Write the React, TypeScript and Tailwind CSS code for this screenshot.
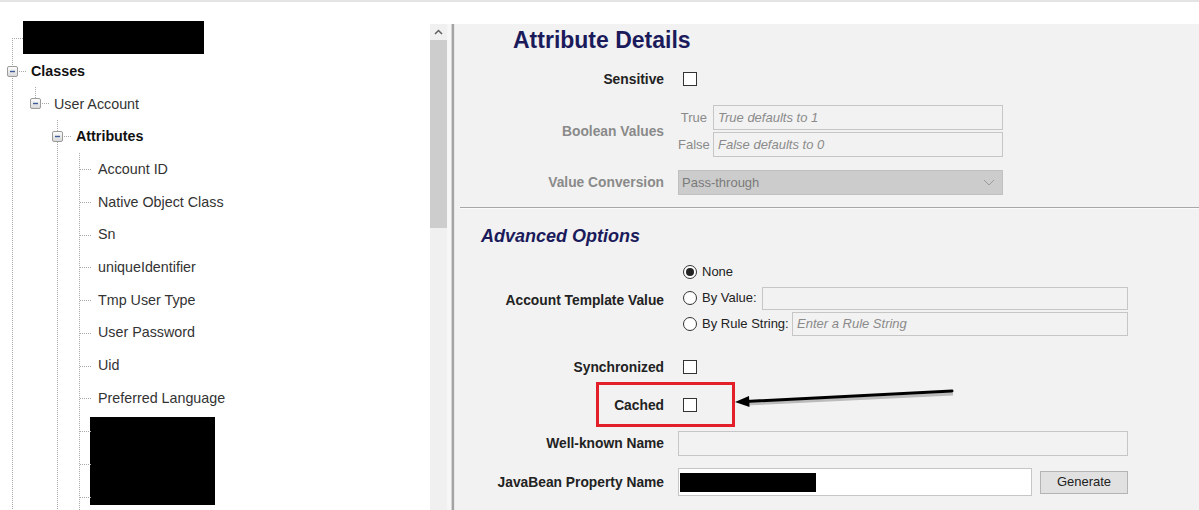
import React from 'react';

const leaves = [
  'Account ID',
  'Native Object Class',
  'Sn',
  'uniqueIdentifier',
  'Tmp User Type',
  'User Password',
  'Uid',
  'Preferred Language',
];

const Expander: React.FC<{ x: number; y: number }> = ({ x, y }) => (
  <g>
    <rect x={x + 0.5} y={y + 0.5} width={10} height={10} rx={1.5} fill="url(#exp)" stroke="#9b9b9b" />
    <line x1={x + 3} y1={y + 5.5} x2={x + 8} y2={y + 5.5} stroke="#3b5b9b" strokeWidth={1.4} />
  </g>
);

const TreeLines: React.FC = () => {
  const dot = { stroke: '#a8a8a8', strokeWidth: 1, strokeDasharray: '1 1' };
  const leafYs = [169, 202, 235, 267, 300, 333, 366, 398, 431, 464, 497];
  return (
    <svg className="absolute left-0 top-0" width={430} height={510}>
      <defs>
        <linearGradient id="exp" x1="0" y1="0" x2="0" y2="1">
          <stop offset="0" stopColor="#ffffff" />
          <stop offset="1" stopColor="#d6d6d6" />
        </linearGradient>
      </defs>
      <line x1={12.5} y1={38} x2={12.5} y2={510} {...dot} />
      <line x1={12} y1={38.5} x2={23} y2={38.5} {...dot} />
      <line x1={17} y1={71.5} x2={27} y2={71.5} {...dot} />
      <line x1={35.5} y1={87} x2={35.5} y2={98} {...dot} />
      <line x1={40} y1={103.5} x2={50} y2={103.5} {...dot} />
      <line x1={57.5} y1={120} x2={57.5} y2={510} {...dot} />
      <line x1={62} y1={136.5} x2={72} y2={136.5} {...dot} />
      <line x1={79.5} y1={153} x2={79.5} y2={510} {...dot} />
      {leafYs.map((y) => (
        <line key={y} x1={80} y1={y + 0.5} x2={92} y2={y + 0.5} {...dot} />
      ))}
      <Expander x={7} y={66} />
      <Expander x={30} y={98} />
      <Expander x={52} y={131} />
    </svg>
  );
};

const Checkbox: React.FC = () => (
  <span className="ml-[5px] block w-[14px] h-[14px] border border-[#333] bg-white" />
);

const Radio: React.FC<{ checked?: boolean }> = ({ checked }) => (
  <span className="flex shrink-0 items-center justify-center w-[14px] h-[14px] rounded-full border border-[#333] bg-white">
    {checked && <span className="block w-[8px] h-[8px] rounded-full bg-[#222]" />}
  </span>
);

const Label: React.FC<{ children: React.ReactNode; muted?: boolean; extra?: string }> = ({
  children,
  muted,
  extra = '',
}) => (
  <div
    className={`w-[209px] shrink-0 pt-[2px] text-right text-[13.8px] font-bold ${muted ? 'text-[#8a8a8a]' : 'text-[#222]'} ${extra}`}
  >
    {children}
  </div>
);

const TextBox: React.FC<{ w: string; placeholder?: string; h?: string }> = ({ w, placeholder, h = 'h-[25px]' }) => (
  <div
    className={`${w} ${h} border border-[#c6c6c6] bg-[#f2f2f2] px-[4px] flex items-center text-[13px] italic text-[#8a8a8a]`}
  >
    {placeholder}
  </div>
);

export default function App() {
  return (
    <div className="relative w-[1199px] h-[510px] overflow-hidden bg-white flex flex-col font-['Liberation_Sans',Arial,sans-serif]">
      <div className="h-[2px] bg-[#e4e4e4] shrink-0" />
      <div className="flex flex-1 min-h-0">
        {/* tree */}
        <div className="w-[430px] shrink-0 bg-white pt-[19px] text-[14.3px] text-[#333]">
          <div className="h-[32.7px] flex items-center">
            <div className="ml-[23px] w-[181px] h-[33px] bg-black" />
          </div>
          <div className="pt-[1.5px]">
            <div className="h-[32.7px] flex items-center pl-[31px] font-bold text-[#111]">Classes</div>
            <div className="h-[32.7px] flex items-center pl-[54px]">User Account</div>
            <div className="h-[32.7px] flex items-center pl-[76px] font-bold text-[#111]">Attributes</div>
            {leaves.map((l) => (
              <div key={l} className="h-[32.7px] flex items-center pl-[98px]">
                {l}
              </div>
            ))}
          </div>
          <div className="mt-[2.5px] ml-[90px] w-[125px] h-[88px] bg-black" />
        </div>

        <div className="flex-1 flex flex-col">
          <div className="h-[22px] bg-white shrink-0" />
          <div className="flex-1 flex bg-[#f3f3f3]">
            {/* scrollbar */}
            <div className="w-[17px] flex flex-col bg-[#f0f0f0]">
              <div className="h-[16px] flex items-center justify-center">
                <svg width="9" height="6" viewBox="0 0 9 6">
                  <path d="M1 5 L4.5 1.5 L8 5" fill="none" stroke="#606060" strokeWidth="1.5" />
                </svg>
              </div>
              <div className="h-[188px] bg-[#cdcdcd]" />
            </div>
            <div className="w-[4px] bg-[#f6f6f6]" />
            <div className="w-[4px] border-l border-[#d4d4d4] bg-[#a3a3a3] border-r border-r-[#e8e8e8]" />

            {/* details panel */}
            <div className="flex-1 bg-[#f2f2f2] flex flex-col">
              <div className="h-[32px] flex items-center pl-[58px] text-[23px] font-bold text-[#1b1b5c]">
                Attribute Details
              </div>

              <div className="mt-[10px] h-[26px] flex items-center">
                <Label>Sensitive</Label>
                <div className="ml-[14px]">
                  <Checkbox />
                </div>
              </div>

              <div className="mt-[13px] flex items-center">
                <Label muted>Boolean Values</Label>
                <div className="ml-[14px] flex flex-col gap-[2px]">
                  <div className="flex items-center">
                    <span className="w-[29px] text-right text-[13px] text-[#8a8a8a]">True</span>
                    <div className="ml-[6px]">
                      <TextBox w="w-[290px]" placeholder="True defaults to 1" />
                    </div>
                  </div>
                  <div className="flex items-center">
                    <span className="w-[29px] text-right text-[13px] text-[#8a8a8a]">False</span>
                    <div className="ml-[6px]">
                      <TextBox w="w-[290px]" placeholder="False defaults to 0" />
                    </div>
                  </div>
                </div>
              </div>

              <div className="mt-[13px] h-[25px] flex items-center">
                <Label muted>Value Conversion</Label>
                <div className="ml-[14px] w-[325px] h-[25px] bg-[#cccccc] border border-[#c0c0c0] flex items-center justify-between px-[3px] text-[13px] text-[#7a7a7a]">
                  <span>Pass-through</span>
                  <svg width="12" height="7" viewBox="0 0 12 7" className="mr-[4px]">
                    <path d="M1 1 L6 6 L11 1" fill="none" stroke="#9a9a9a" strokeWidth="1" />
                  </svg>
                </div>
              </div>

              <div className="mt-[12px] ml-[5px] h-[2px] border-t border-[#a8a8a8] border-b border-b-[#fbfbfb]" />

              <div className="mt-[13px] h-[28px] flex items-center pl-[26px] text-[18px] font-bold italic text-[#1b1b5c]">
                Advanced Options
              </div>

              <div className="mt-[10px] flex items-center">
                <Label extra="mt-[4px]">Account Template Value</Label>
                <div className="ml-[19px] flex flex-col gap-[2px] text-[13px] text-[#222]">
                  <div className="h-[24px] flex items-center">
                    <Radio checked />
                    <span className="ml-[5px]">None</span>
                  </div>
                  <div className="h-[24px] flex items-center">
                    <Radio />
                    <span className="ml-[5px] w-[55px] whitespace-nowrap">By Value:</span>
                    <div className="ml-[5px]">
                      <TextBox w="w-[366px]" h="h-[23px]" />
                    </div>
                  </div>
                  <div className="h-[24px] flex items-center">
                    <Radio />
                    <span className="ml-[5px] w-[84px] whitespace-nowrap">By Rule String:</span>
                    <div className="ml-[6px]">
                      <TextBox w="w-[336px]" h="h-[24px]" placeholder="Enter a Rule String" />
                    </div>
                  </div>
                </div>
              </div>

              <div className="mt-[20px] h-[22px] flex items-center">
                <Label>Synchronized</Label>
                <div className="ml-[14px]">
                  <Checkbox />
                </div>
              </div>

              <div className="mt-[16px] h-[22px] flex items-center">
                <Label>Cached</Label>
                <div className="ml-[14px]">
                  <Checkbox />
                </div>
              </div>

              <div className="mt-[15px] h-[25px] flex items-center">
                <Label>Well-known Name</Label>
                <div className="ml-[14px]">
                  <TextBox w="w-[450px]" />
                </div>
              </div>

              <div className="mt-[12px] h-[28px] flex items-center">
                <Label>JavaBean Property Name</Label>
                <div className="ml-[14px] w-[354px] h-[28px] bg-white border border-[#c6c6c6] flex items-center pl-[1px]">
                  <div className="w-[136px] h-[19px] bg-black" />
                </div>
                <button className="ml-[8px] w-[88px] h-[23px] bg-[#e1e1e1] border border-[#b4b4b4] text-[13px] text-[#222]">
                  Generate
                </button>
              </div>
            </div>
          </div>
        </div>
      </div>

      <TreeLines />

      {/* annotation: red highlight box and arrow */}
      <div className="absolute left-[596px] top-[382px] w-[139px] h-[45px] border-[3px] border-[#e3202a]" />
      <svg className="absolute left-[730px] top-[385px]" width={230} height={25}>
        <line x1={222} y1={7} x2={16} y2={17} stroke="#bbb" strokeWidth={3} transform="translate(1,2)" />
        <line x1={222} y1={6} x2={16} y2={16.5} stroke="#000" strokeWidth={3} strokeLinecap="round" />
        <path d="M5 17 L19 11 L19.5 22 Z" fill="#000" />
      </svg>
    </div>
  );
}
